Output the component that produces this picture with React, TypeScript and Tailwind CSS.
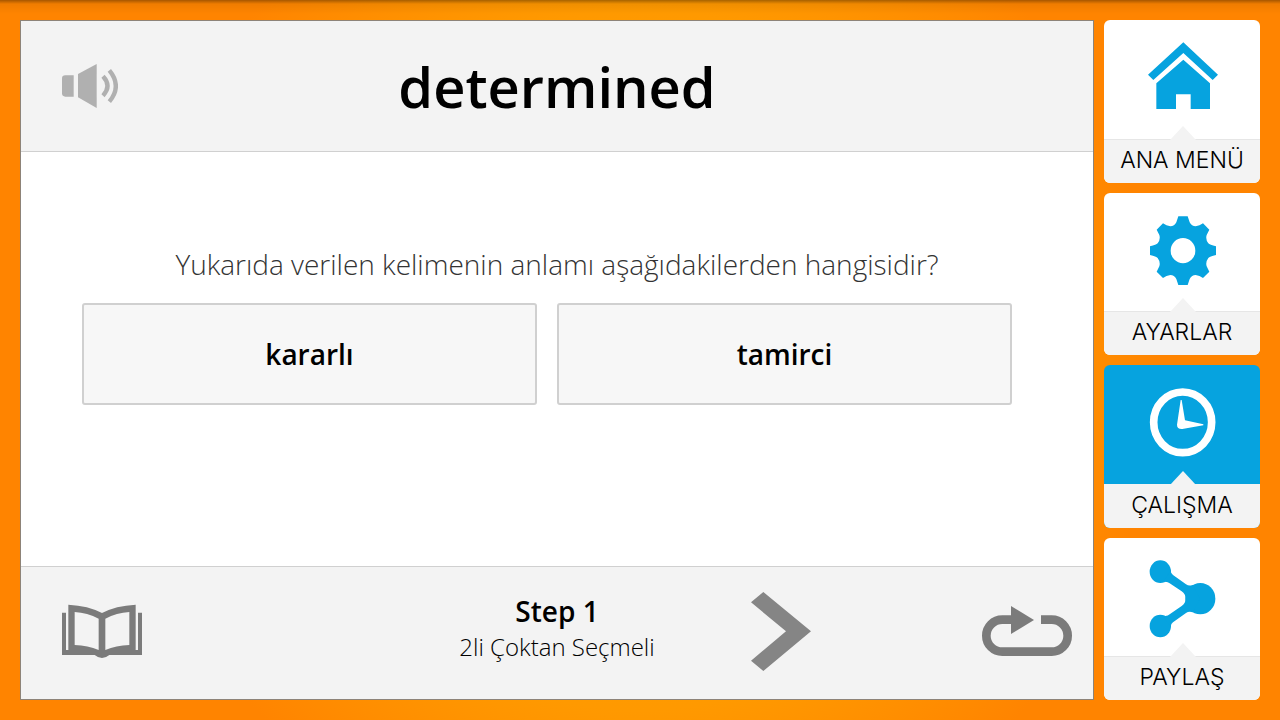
import type { ReactNode } from "react";

function SpeakerIcon() {
  return (
    <svg viewBox="186 192 168 132" className="h-[44px] w-[56px]" aria-hidden="true">
      <g fill="#b0b0b0">
        <path d="M196 226H221V290H196Q186 290 186 280V236Q186 226 196 226Z" />
        <path d="M234 222L290 192V324L234 292Z" />
      </g>
      <g fill="none" stroke="#b0b0b0" strokeWidth="13">
        <path d="M309 229Q336 258 309 287" />
        <path d="M328 211Q367 258 328 305" />
      </g>
    </svg>
  );
}

function BookIcon() {
  return (
    <svg viewBox="186 132 240 162" className="h-[54px] w-[80px]" aria-hidden="true">
      <path
        fill="#7b7b7b"
        fillRule="evenodd"
        d="M186 158H198V270H205V134Q265 137 306 159Q347 137 407 134V270H414V158H426V285H328Q306 303 284 285H186ZM224 156V255Q264 256 296 270V176Q262 158 224 156ZM388 156Q350 158 316 176V270Q348 256 388 255Z"
      />
    </svg>
  );
}

function NextIcon() {
  return (
    <svg viewBox="930 66 180 237" className="h-[79px] w-[60px]" aria-hidden="true">
      <path fill="#858585" d="M967 66L1110 184L967 303L930 272L1035 184L930 97Z" />
    </svg>
  );
}

function RepeatIcon() {
  return (
    <svg viewBox="126 138 270 150" className="h-[50px] w-[90px]" aria-hidden="true">
      <path
        fill="none"
        stroke="#7b7b7b"
        strokeWidth="26"
        d="M216 179H187A48 48 0 0 0 187 275H335A48 48 0 0 0 335 179H303"
      />
      <path fill="#7b7b7b" d="M213 138L282 180L213 222Z" />
    </svg>
  );
}

function HomeIcon() {
  return (
    <svg viewBox="42 60 468 354" className="h-[118px] w-[156px]" aria-hidden="true">
      <g fill="#06a3df">
        <path d="M280 127L384 224L368 240L280 159L190 240L174 224Z" />
        <path d="M280 179L360 250V327H302V283H258V327H199V250Z" />
      </g>
    </svg>
  );
}

function GearIcon() {
  return (
    <svg viewBox="42 21 468 354" className="h-[118px] w-[156px]" aria-hidden="true">
      <path
        fill="#06a3df"
        fillRule="evenodd"
        d="M265 91H293L299 109Q305 121 317 121Q329 119 339 112L358 131L350 147Q346 160 355 172Q359 177 378 181V207Q359 211 355 216Q346 228 350 241L358 257L339 276Q329 269 317 267Q305 267 299 279L293 297H265L259 279Q253 267 241 267Q229 269 219 276L200 257L208 241Q212 228 203 216Q199 211 180 207V181Q199 177 203 172Q212 160 208 147L200 131L219 112Q229 119 241 121Q253 121 259 109ZM279 156A37 38 0 1 0 279 232A37 38 0 1 0 279 156Z"
      />
    </svg>
  );
}

function ClockIcon() {
  return (
    <svg viewBox="42 18 468 354" className="h-[118px] w-[156px]" aria-hidden="true">
      <ellipse cx="278" cy="190" rx="87" ry="91" fill="none" stroke="#fff" strokeWidth="23" />
      <path fill="#fff" d="M272 123H275L285 184L340 196V199L277 210Q261 211 261 197Z" />
    </svg>
  );
}

function ShareIcon() {
  return (
    <svg viewBox="42 21 468 354" className="h-[118px] w-[156px]" aria-hidden="true">
      <g fill="#06a3df">
        <ellipse cx="211" cy="122" rx="32" ry="34" />
        <ellipse cx="211" cy="285" rx="32" ry="34" />
        <ellipse cx="331" cy="203" rx="45" ry="47" />
        <path d="M242 120Q243 128 249 132L288 160Q297 166 308 162L330 203L308 244Q297 240 288 246L249 274Q243 278 242 288L218 254Q232 257 239 250L275 225Q287 216 287 203Q287 190 275 181L239 157Q232 150 218 153Z" />
      </g>
    </svg>
  );
}

interface MenuItem {
  label: string;
  icon: ReactNode;
  active?: boolean;
}

const menu: MenuItem[] = [
  { label: "ANA MENÜ", icon: <HomeIcon /> },
  { label: "AYARLAR", icon: <GearIcon /> },
  { label: "ÇALIŞMA", icon: <ClockIcon />, active: true },
  { label: "PAYLAŞ", icon: <ShareIcon /> },
];

function MenuCard({ label, icon, active }: MenuItem) {
  return (
    <a
      href="#"
      aria-current={active ? "page" : undefined}
      className={`flex flex-1 flex-col overflow-hidden rounded-md ${active ? "bg-[#06a3df]" : "bg-white"}`}
    >
      <span className="flex-1">{icon}</span>
      <span
        className={`relative flex h-11 items-center justify-center border-t bg-[#f3f3f3] pb-0.5 font-[Inter,'Liberation_Sans',sans-serif] text-[23px] leading-none font-light text-black ${active ? "border-[#f3f3f3]" : "border-[#e6e6e6]"}`}
      >
        <svg viewBox="0 0 26 14" className="absolute -top-[14px] left-[66px] h-[14px] w-[26px]" aria-hidden="true">
          <path d="M0 14L13 0L26 14Z" fill="#f3f3f3" />
        </svg>
        {label}
      </span>
    </a>
  );
}

const answers = ["kararlı", "tamirci"];

export default function App() {
  return (
    <div className="flex min-h-screen gap-[10px] bg-[linear-gradient(rgba(0,0,0,0.35)_0px,rgba(0,0,0,0.2)_2px,rgba(0,0,0,0.06)_4px,transparent_14px),radial-gradient(circle_at_center,#ffa600_0px,#ff9900_350px,#ff8400_520px)] p-5 font-['Open_Sans','Noto_Sans',sans-serif] text-black">
      <div className="flex flex-1 flex-col border border-[#8d8378] bg-white">
        <header className="grid h-[131px] grid-cols-[1fr_auto_1fr] items-center border-b border-[#d0d0d0] bg-[#f3f3f3] px-[41px]">
          <button type="button" aria-label="Dinle" className="justify-self-start">
            <SpeakerIcon />
          </button>
          <h1 className="text-[56px] leading-none font-semibold">determined</h1>
        </header>

        <main className="flex flex-1 flex-col pt-[92px]">
          <p className="text-center text-[28px] leading-10 font-light text-[#333]">
            Yukarıda verilen kelimenin anlamı aşağıdakilerden hangisidir?
          </p>
          <div className="mt-[19px] grid grid-cols-2 gap-5 pr-[81px] pl-[61px]">
            {answers.map((answer) => (
              <button
                key={answer}
                type="button"
                className="h-[102px] rounded-[3px] border-2 border-[#d0d0d0] bg-[#f7f7f7] text-[28px] font-semibold"
              >
                {answer}
              </button>
            ))}
          </div>
        </main>

        <footer className="grid h-[133px] grid-cols-[1fr_auto_1fr] items-center border-t border-[#d0d0d0] bg-[#f3f3f3] px-[21px] pb-1">
          <button type="button" aria-label="Sözlük" className="ml-5 justify-self-start">
            <BookIcon />
          </button>
          <div className="pb-1 text-center">
            <p className="text-[28px] leading-9 font-semibold">Step 1</p>
            <p className="text-2xl leading-9 font-light">2li Çoktan Seçmeli</p>
          </div>
          <div className="flex items-center justify-between pl-24">
            <button type="button" aria-label="Sonraki">
              <NextIcon />
            </button>
            <button type="button" aria-label="Tekrarla">
              <RepeatIcon />
            </button>
          </div>
        </footer>
      </div>

      <nav aria-label="Menü" className="flex w-[156px] flex-col gap-[10px]">
        {menu.map((item) => (
          <MenuCard key={item.label} {...item} />
        ))}
      </nav>
    </div>
  );
}
